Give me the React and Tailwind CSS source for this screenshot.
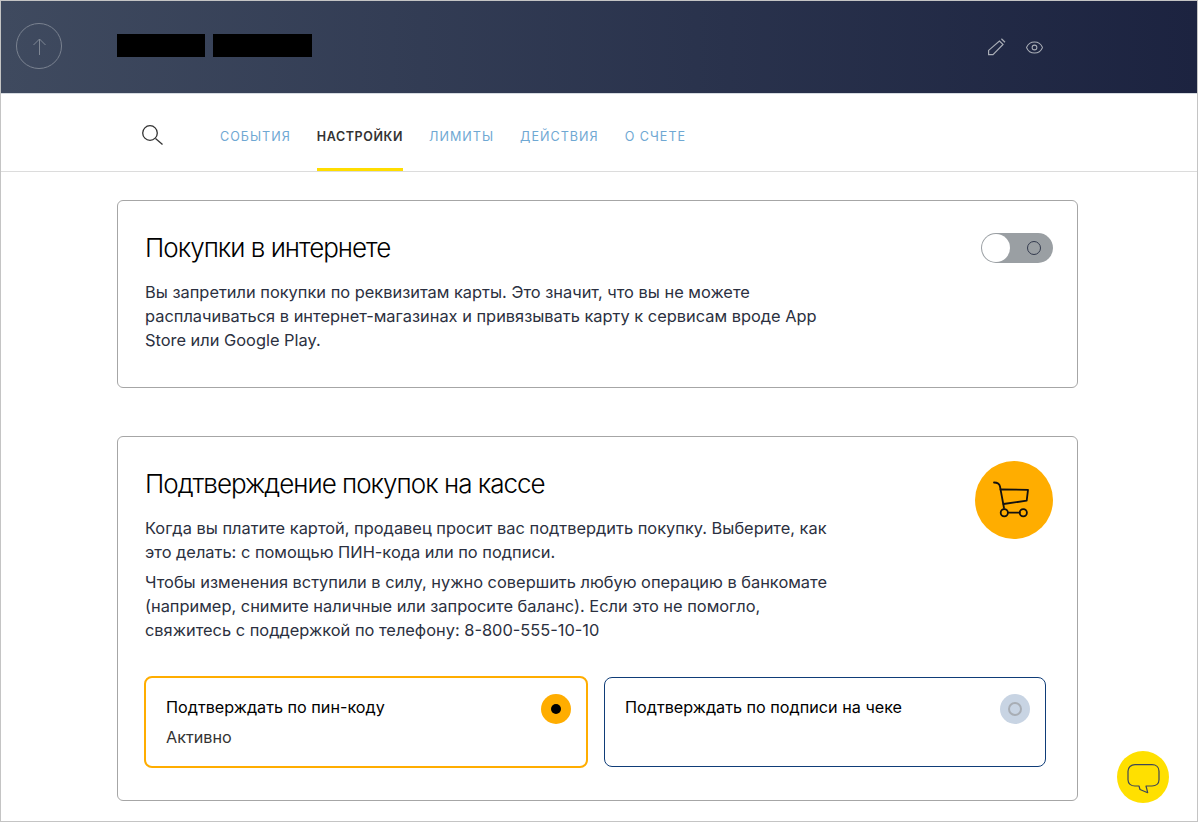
import { Eye } from 'lucide-react';

const tabs = ['СОБЫТИЯ', 'НАСТРОЙКИ', 'ЛИМИТЫ', 'ДЕЙСТВИЯ', 'О СЧЕТЕ'];

function Header() {
  return (
    <header className="flex h-[93px] items-center border-b border-[#d5dae0] bg-gradient-to-r from-[#3f4a5f] to-[#1c2340] pb-[2px] pl-[15px]">
      <div className="flex h-[46px] w-[46px] items-center justify-center rounded-full border border-[#7a8290]">
        <svg width="13" height="17" viewBox="0 0 13 17" fill="none" stroke="#7f8794" strokeWidth="1">
          <path d="M6.500 1v16M.5 7l6-6 6 6" />
        </svg>
      </div>
      <div className="ml-[55px] mt-[-1px] flex gap-[8px]">
        <div className="h-[23px] w-[88px] bg-black" />
        <div className="h-[23px] w-[99px] bg-black" />
      </div>
      <div className="ml-[674px] mt-[3px] flex items-center gap-[19px] text-[#a9adb6]">
        <svg width="20" height="20" viewBox="0 0 20 20" fill="none" stroke="currentColor" strokeWidth="1.2" className="mt-[-2px]">
          <path d="M13.400 4 17 7.400 7 17.600H2.600v-4.200z" />
          <path d="M15.400 1.800 19 5.200" />
        </svg>
        <Eye className="h-[19px] w-[19px]" strokeWidth={1.3} />
      </div>
    </header>
  );
}

function Tabs() {
  return (
    <nav className="flex h-[78px] items-stretch border-b border-[#dcdcdc] pl-[141px]">
      <div className="flex w-[78px] items-start pt-[31px]">
        <svg width="21" height="21" viewBox="0 0 21 21" fill="none" stroke="#333" strokeWidth="1.300">
          <circle cx="8" cy="8" r="7.300" />
          <path d="M13.500 13.500 20.500 19.500" />
        </svg>
      </div>
      <div className="flex gap-[26px]">
        {tabs.map((tab) =>
          tab === 'НАСТРОЙКИ' ? (
            <span key={tab} className="flex items-center border-b-[3px] border-[#ffdd00] pt-[12px] text-[12.5px] font-semibold tracking-[0.6px] text-[#333]">
              {tab}
            </span>
          ) : (
            <span key={tab} className="flex items-center pt-[9px] text-[12.6px] tracking-[1px] text-[#6fa8d3]">
              {tab}
            </span>
          ),
        )}
      </div>
    </nav>
  );
}

function Option({ title, status, active }) {
  return (
    <div
      className={
        active
          ? 'relative ml-[-1px] h-[92px] w-[444px] rounded-[8px] border-2 border-[#ffad00] px-[20px] pt-[17px]'
          : 'relative mt-[1px] h-[90px] w-[442px] rounded-[8px] border border-[#0f3d78] px-[20px] pt-[17px]'
      }
    >
      <div className="text-[16.2px] leading-[24px] text-black">{title}</div>
      {status && <div className="mt-[6px] text-[16.2px] leading-[24px] text-[#333]">{status}</div>}
      {active ? (
        <div className="absolute right-[15px] top-[16px] flex h-[30px] w-[30px] items-center justify-center rounded-full bg-[#ffad00]">
          <div className="h-[10px] w-[10px] rounded-full bg-black" />
        </div>
      ) : (
        <div className="absolute right-[15px] top-[16px] flex h-[30px] w-[30px] items-center justify-center rounded-full bg-[#c8d4e3]">
          <div className="h-[14px] w-[14px] rounded-full border-2 border-[#a8adb4]" />
        </div>
      )}
    </div>
  );
}

export default function App() {
  return (
    <div className="relative h-[822px] w-[1198px] overflow-hidden border border-[#c4c4c4] bg-white font-['Inter',sans-serif]">
      <Header />
      <Tabs />
      <main className="ml-[116px] mt-[28px] w-[961px]">
        <section className="relative h-[188px] rounded-[6px] border border-[#a6a6a6] px-[27px] pt-[29px]">
          <h2 className="text-[26px] font-light leading-[36px] tracking-[-1px] text-black">Покупки в интернете</h2>
          <p className="mt-[14px] w-[690px] text-[16.4px] leading-[24px] text-[#2b3040]">
            Вы запретили покупки по реквизитам карты. Это значит, что вы не можете расплачиваться в интернет-магазинах и привязывать карту к сервисам вроде App Store или Google Play.
          </p>
          <div className="absolute right-[24px] top-[32px] flex h-[30px] w-[72px] items-center justify-between rounded-full bg-[#9a9fa3] pl-[1px] pr-[12px]">
            <div className="h-[28px] w-[28px] rounded-full bg-white" />
            <div className="h-[14px] w-[14px] rounded-full border border-[#333a4d]" />
          </div>
        </section>
        <section className="relative mt-[48px] h-[365px] rounded-[6px] border border-[#a6a6a6] px-[27px] pt-[29px]">
          <h2 className="text-[26px] font-light leading-[36px] tracking-[-1px] text-black">Подтверждение покупок на кассе</h2>
          <p className="mt-[14px] w-[690px] text-[16.4px] leading-[24px] text-[#2b3040]">
            Когда вы платите картой, продавец просит вас подтвердить покупку. Выберите, как это делать: с помощью ПИН-кода или по подписи.
          </p>
          <p className="mt-[6px] w-[690px] text-[16.4px] leading-[24px] text-[#2b3040]">
            Чтобы изменения вступили в силу, нужно совершить любую операцию в банкомате (например, снимите наличные или запросите баланс). Если это не помогло, свяжитесь с поддержкой по телефону: 8-800-555-10-10
          </p>
          <div className="mt-[34px] flex items-start gap-[16px]">
            <Option title="Подтверждать по пин-коду" status="Активно" active />
            <Option title="Подтверждать по подписи на чеке" />
          </div>
          <div className="absolute right-[24px] top-[24px] flex h-[78px] w-[78px] items-center justify-center rounded-full bg-[#ffad00]">
            <svg width="40" height="40" viewBox="0 0 40 40" fill="none" stroke="#111" strokeWidth="1.800" strokeLinejoin="round" strokeLinecap="round" className="overflow-visible">
              <path d="M0 2.500c3.500 0 5.400 1 6 4L10 28" />
              <path d="M6.500 9.500 34 9.800 32.700 20.700 9.500 24" />
              <circle cx="10.300" cy="32.700" r="3.600" />
              <circle cx="29.300" cy="32.700" r="3.600" />
              <path d="M14 32.700h11.700" />
            </svg>
          </div>
        </section>
      </main>
      <div className="absolute left-[1116px] top-[750px] flex h-[52px] w-[52px] items-center justify-center rounded-full bg-[#ffe000]">
        <svg width="34" height="34" viewBox="0 0 34 34" fill="none" stroke="#3e4757" strokeWidth="1.200" strokeLinejoin="round">
          <path d="M9 4.700h17c4 0 7 2.500 7 6.500v8.500c0 4-3 6.300-7 6.300h-6l1.700 6.700-7.700-3.200-1-3.500H9c-4 0-7-2.300-7-6.300v-8.500c0-4 3-6.500 7-6.500z" />
        </svg>
      </div>
    </div>
  );
}
